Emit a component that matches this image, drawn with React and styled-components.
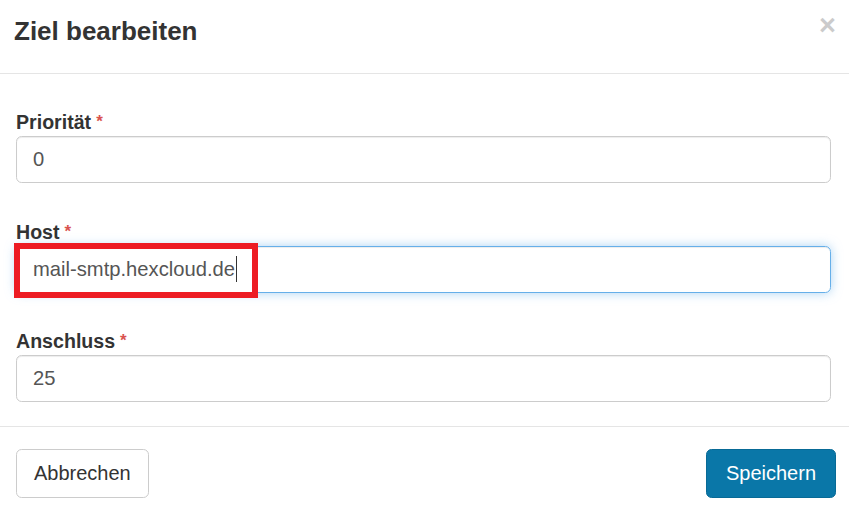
import React from "react";
import styled, { createGlobalStyle } from "styled-components";

const Global = createGlobalStyle`
  html, body { margin: 0; padding: 0; background: #fff; }
  body { font-family: "Liberation Sans", Arial, Helvetica, sans-serif; color: #333; }
  * { box-sizing: border-box; }
`;

const Modal = styled.div`
  width: 849px;
  height: 507px;
  background: #fff;
  display: flex;
  flex-direction: column;
  overflow: hidden;
`;

const Header = styled.div`
  height: 74px;
  padding: 16px 13px 0 14px;
  display: flex;
  justify-content: space-between;
  align-items: flex-start;
  border-bottom: 1px solid #e5e5e5;
`;

const Title = styled.h4`
  margin: 0;
  font-size: 26px;
  line-height: 30px;
  font-weight: 700;
  color: #333;
`;

const Close = styled.button`
  border: 0;
  background: transparent;
  padding: 0;
  margin-top: -5px;
  font-family: "Liberation Sans", Arial, sans-serif;
  font-size: 29px;
  line-height: 29px;
  font-weight: 700;
  color: #000;
  opacity: 0.2;
  cursor: pointer;
`;

const Body = styled.div`
  padding: 36px 18px 24px 16px;
  display: flex;
  flex-direction: column;
  gap: 36.5px;
  border-bottom: 1px solid #e5e5e5;
`;

const Group = styled.div`
  position: relative;
  display: flex;
  flex-direction: column;
`;

const Label = styled.label`
  display: block;
  font-size: 19.6px;
  line-height: 24px;
  font-weight: 700;
  color: #333;
  margin-bottom: 2px;
`;

const Star = styled.span`
  color: #d9534f;
  font-size: 17px;
  margin-left: 5px;
  vertical-align: 2px;
`;

const Field = styled.div`
  height: 47px;
  border: 1px solid ${(p) => (p.$focused ? "#66afe9" : "#ccc")};
  border-radius: 5.6px;
  padding: 0 16px;
  font-size: 20.2px;
  line-height: 45px;
  color: #555;
  display: flex;
  align-items: center;
  box-shadow: ${(p) =>
    p.$focused
      ? "inset 0 1px 1px rgba(0,0,0,.075), 0 0 11px rgba(102,175,233,.55)"
      : "inset 0 1px 1px rgba(0,0,0,.075)"};
`;

const Caret = styled.span`
  display: inline-block;
  width: 1px;
  height: 26px;
  background: #333;
  margin-left: 1px;
`;

const Highlight = styled.div`
  position: absolute;
  left: -2px;
  top: 23px;
  width: 244px;
  height: 55px;
  border: 6px solid #ed1c24;
  pointer-events: none;
`;

const Footer = styled.div`
  padding: 22px 13px 0 16px;
  display: flex;
  justify-content: space-between;
  align-items: flex-start;
`;

const Button = styled.button`
  height: 49px;
  padding: 0 17px;
  font-family: "Liberation Sans", Arial, sans-serif;
  font-size: 20px;
  border-radius: 5.6px;
  border: 1px solid ${(p) => (p.$primary ? "#086a96" : "#ccc")};
  background: ${(p) => (p.$primary ? "#0a77a8" : "#fff")};
  color: ${(p) => (p.$primary ? "#fff" : "#333")};
  cursor: pointer;
  min-width: ${(p) => (p.$primary ? "130px" : "auto")};
`;

const fields = [
  { label: "Priorität", value: "0" },
  { label: "Host", value: "mail-smtp.hexcloud.de", focused: true },
  { label: "Anschluss", value: "25" },
];

export default function App() {
  return (
    <>
      <Global />
      <Modal>
        <Header>
          <Title>Ziel bearbeiten</Title>
          <Close aria-label="Schließen">×</Close>
        </Header>
        <Body>
          {fields.map((f) => (
            <Group key={f.label}>
              <Label>
                {f.label}
                <Star>*</Star>
              </Label>
              <Field $focused={f.focused}>
                {f.value}
                {f.focused && <Caret />}
              </Field>
              {f.focused && <Highlight />}
            </Group>
          ))}
        </Body>
        <Footer>
          <Button>Abbrechen</Button>
          <Button $primary>Speichern</Button>
        </Footer>
      </Modal>
    </>
  );
}
